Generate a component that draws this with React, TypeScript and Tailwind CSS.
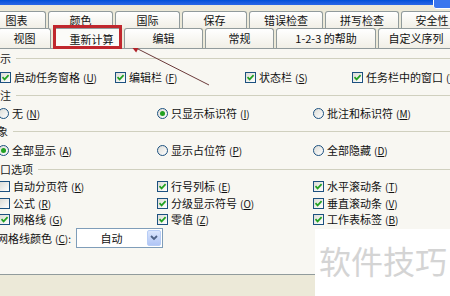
import React from 'react'

const tabsTop = [
  { label: '图表', w: 'w-[61px]' },
  { label: '颜色', w: 'w-[67px]' },
  { label: '国际', w: 'w-[67px]' },
  { label: '保存', w: 'w-[67px]' },
  { label: '错误检查', w: 'w-[76px]' },
  { label: '拼写检查', w: 'w-[76px]' },
  { label: '安全性', w: 'w-[64px]' },
]

const tabsFront = [
  { label: '视图', w: 'w-[55px]' },
  { label: '重新计算', w: 'w-[71px]', active: true },
  { label: '编辑', w: 'w-[81px]' },
  { label: '常规', w: 'w-[71px]' },
  { label: '1-2-3 的帮助', w: 'w-[102px]' },
  { label: '自定义序列', w: 'w-[78px]' },
]

const Check = ({ on }: { on: boolean }) => (
  <span className="w-[11px] h-[11px] shrink-0 border border-[#1c5180] bg-linear-to-br from-[#dcdcd7] to-white flex items-center justify-center">
    {on && (
      <svg viewBox="0 0 9 9" className="w-[9px] h-[9px]">
        <path d="M1.5 4.2 L3.6 6.4 L7.6 2.2" stroke="#21a121" strokeWidth="1.7" fill="none" />
      </svg>
    )}
  </span>
)

const Radio = ({ on }: { on: boolean }) => (
  <span className="w-[11px] h-[11px] shrink-0 rounded-full border border-[#1c5180] bg-linear-to-br from-[#dcdcd7] to-white flex items-center justify-center">
    {on && <span className="w-[5px] h-[5px] rounded-full bg-[#21a121]" />}
  </span>
)

const Label = ({ text, k }: { text: string; k: string }) => (
  <span className="whitespace-nowrap">
    {text}
    <span className="ml-[3px] text-[10px]">
      (<span className="underline">{k}</span>)
    </span>
  </span>
)

const Item = ({ w, kind, on, text, k }: { w: string; kind: 'check' | 'radio'; on: boolean; text: string; k: string }) => (
  <div className={`${w} shrink-0 flex items-center gap-[3px]`}>
    {kind === 'check' ? <Check on={on} /> : <Radio on={on} />}
    <Label text={text} k={k} />
  </div>
)

const Group = ({ title, className }: { title: string; className: string }) => (
  <div className={`${className} flex items-center`}>
    <span className="whitespace-nowrap text-[#1a1a1a]">{title}</span>
    <span className="flex-1 h-px bg-[#d0d0bf] ml-[5px]" />
  </div>
)

export default function App() {
  return (
    <div className="relative w-[450px] h-[296px] overflow-hidden bg-[#ece9d8] text-[#111] text-[11px] leading-none font-['Noto_Sans_CJK_SC','Noto_Sans',sans-serif]">
      {/* bottom of the window title bar */}
      <div className="h-[5px] bg-linear-to-b from-[#0050d8] to-[#2a68e6]" />
      <div className="absolute left-[433px] -top-[8px] w-[20px] h-[17px] rounded-[3px] border border-white bg-[#3a76ee]" />

      {/* back tab row */}
      <div className="mt-[6px] h-[17px] flex -ml-[14px]">
        {tabsTop.map(t => (
          <div key={t.label} className={`${t.w} shrink-0 h-full px-[1px]`}>
            <div className="h-full rounded-t-[3px] border border-b-0 border-[#919b9c] bg-linear-to-b from-white to-[#f1efe6] flex items-center justify-center">
              {t.label}
            </div>
          </div>
        ))}
      </div>

      {/* front tab row */}
      <div className="h-[20px] flex -ml-[3px] relative z-10">
        {tabsFront.map(t => (
          <div key={t.label} className={`${t.w} shrink-0 h-full px-[1px] relative`}>
            <div
              className={
                t.active
                  ? 'h-[21px] rounded-t-[3px] border border-b-0 border-[#919b9c] bg-[#fbfbf8] flex items-center justify-center pl-[8px]'
                  : 'h-full rounded-t-[3px] border border-b-0 border-[#919b9c] bg-linear-to-b from-white to-[#f1efe6] flex items-center justify-center'
              }
            >
              {t.label}
            </div>
            {t.active && <div className="absolute left-[1px] right-[1px] -top-[3px] -bottom-[1px] border-[3px] border-[#c0272d]" />}
          </div>
        ))}
      </div>

      {/* tab page */}
      <div className="h-[227px] bg-[#f8f7f2] border-t border-b border-[#919b9c] flex flex-col">
        <Group title="示" className="h-[19px]" />
        <div className="h-[18px] flex items-center">
          <Item w="w-[115px]" kind="check" on text="启动任务窗格" k="U" />
          <Item w="w-[130px]" kind="check" on text="编辑栏" k="F" />
          <Item w="w-[107px]" kind="check" on text="状态栏" k="S" />
          <Item w="w-[120px]" kind="check" on text="任务栏中的窗口" k="W" />
        </div>

        <Group title="注" className="h-[18px]" />
        <div className="h-[18px] flex items-center -ml-[2px]">
          <Item w="w-[159px]" kind="radio" on={false} text="无" k="N" />
          <Item w="w-[156px]" kind="radio" on text="只显示标识符" k="I" />
          <Item w="w-[140px]" kind="radio" on={false} text="批注和标识符" k="M" />
        </div>

        <Group title="象" className="h-[18px] -ml-[3px]" />
        <div className="h-[20px] flex items-center -ml-[2px]">
          <Item w="w-[159px]" kind="radio" on text="全部显示" k="A" />
          <Item w="w-[156px]" kind="radio" on={false} text="显示占位符" k="P" />
          <Item w="w-[140px]" kind="radio" on={false} text="全部隐藏" k="D" />
        </div>

        <Group title="口选项" className="h-[18px]" />
        <div className="h-[17px] flex items-center -ml-[1px]">
          <Item w="w-[158px]" kind="check" on={false} text="自动分页符" k="K" />
          <Item w="w-[156px]" kind="check" on text="行号列标" k="E" />
          <Item w="w-[140px]" kind="check" on text="水平滚动条" k="T" />
        </div>
        <div className="h-[16px] flex items-center -ml-[1px]">
          <Item w="w-[158px]" kind="check" on={false} text="公式" k="R" />
          <Item w="w-[156px]" kind="check" on text="分级显示符号" k="O" />
          <Item w="w-[140px]" kind="check" on text="垂直滚动条" k="V" />
        </div>
        <div className="h-[16px] flex items-center -ml-[1px]">
          <Item w="w-[158px]" kind="check" on text="网格线" k="G" />
          <Item w="w-[156px]" kind="check" on text="零值" k="Z" />
          <Item w="w-[140px]" kind="check" on text="工作表标签" k="B" />
        </div>

        <div className="h-[22px] flex items-center">
          <span className="w-[79px] -ml-[3px] shrink-0 whitespace-nowrap">
            网格线颜色
            <span className="ml-[3px] text-[10px]">
              (<span className="underline">C</span>):
            </span>
          </span>
          <div className="w-[87px] h-[20px] border border-[#7f9db9] bg-white flex">
            <div className="flex-1 flex items-center justify-center">自动</div>
            <div className="w-[14px] m-[1px] rounded-[2px] border border-[#b8cdf6] bg-linear-to-b from-[#dbe6fd] to-[#b0c5f5] flex items-center justify-center">
              <svg viewBox="0 0 8 6" className="w-[8px] h-[6px]">
                <path d="M1 1 L4 4 L7 1" stroke="#4d6185" strokeWidth="1.8" fill="none" />
              </svg>
            </div>
          </div>
        </div>
      </div>

      {/* callout arrow */}
      <svg className="absolute left-0 top-0 w-[450px] h-[296px] pointer-events-none" viewBox="0 0 450 296">
        <line x1="137" y1="48.5" x2="209" y2="85" stroke="#6b3a3a" strokeWidth="1" />
        <polygon points="130,45 139.8,45.4 136.2,52.6" fill="#b02228" />
      </svg>

      {/* watermark */}
      <div className="absolute left-[315px] top-[229px] right-0 bottom-0 bg-white pl-[4px] pt-[15px]">
        <span className="text-[32px] leading-none text-[#d4d4d4] whitespace-nowrap">软件技巧</span>
      </div>
    </div>
  )
}
